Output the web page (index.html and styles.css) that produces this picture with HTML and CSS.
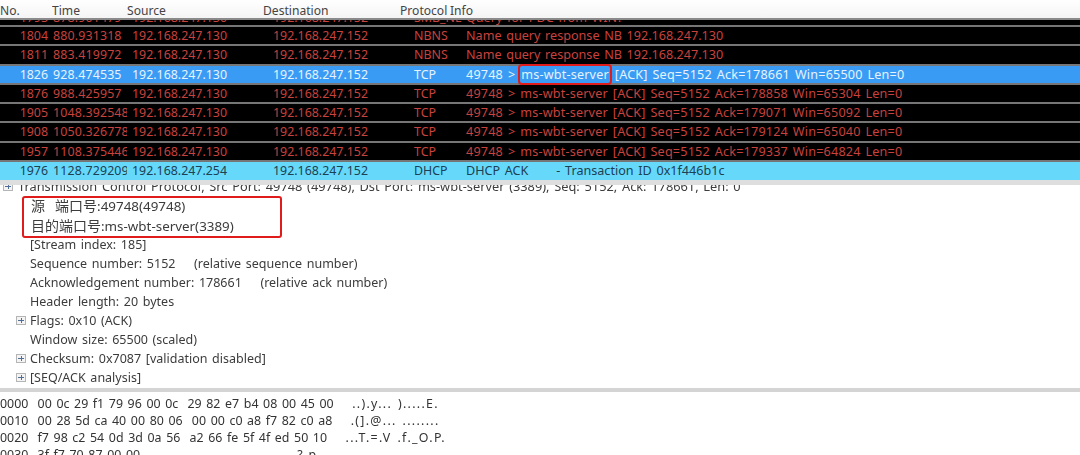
FILE: index.html
```html
<!DOCTYPE html>
<html lang="zh">
<head>
<meta charset="utf-8">
<title>Wireshark</title>
<link rel="stylesheet" href="styles.css">
</head>
<body>
<div class="app">
  <div class="row head"><span>No.</span><span>Time</span><span>Source</span><span>Destination</span><span>Protocol</span><span>Info</span></div>
  <div class="list">
    <div class="row pkt clipped"><span class="no">1793</span><span>878.901479</span><span>192.168.247.130</span><span>192.168.247.152</span><span class="wide">SMB_NE</span><span class="info">Query for PDC from WIN?</span></div>
    <div class="row pkt"><span class="no">1804</span><span>880.931318</span><span>192.168.247.130</span><span>192.168.247.152</span><span>NBNS</span><span class="info">Name query response NB 192.168.247.130</span></div>
    <div class="row pkt"><span class="no">1811</span><span>883.419972</span><span>192.168.247.130</span><span>192.168.247.152</span><span>NBNS</span><span class="info">Name query response NB 192.168.247.130</span></div>
    <div class="row pkt sel"><span class="no">1826</span><span>928.474535</span><span>192.168.247.130</span><span>192.168.247.152</span><span>TCP</span><span class="info tcp">49748 &gt; <b class="mark">ms-wbt-server</b> [ACK] Seq=5152 Ack=178661 Win=65500 Len=0</span></div>
    <div class="row pkt"><span class="no">1876</span><span>988.425957</span><span>192.168.247.130</span><span>192.168.247.152</span><span>TCP</span><span class="info tcp">49748 &gt; ms-wbt-server [ACK] Seq=5152 Ack=178858 Win=65304 Len=0</span></div>
    <div class="row pkt"><span class="no">1905</span><span>1048.392548</span><span>192.168.247.130</span><span>192.168.247.152</span><span>TCP</span><span class="info tcp">49748 &gt; ms-wbt-server [ACK] Seq=5152 Ack=179071 Win=65092 Len=0</span></div>
    <div class="row pkt"><span class="no">1908</span><span>1050.326778</span><span>192.168.247.130</span><span>192.168.247.152</span><span>TCP</span><span class="info tcp">49748 &gt; ms-wbt-server [ACK] Seq=5152 Ack=179124 Win=65040 Len=0</span></div>
    <div class="row pkt"><span class="no">1957</span><span>1108.375446</span><span>192.168.247.130</span><span>192.168.247.152</span><span>TCP</span><span class="info tcp">49748 &gt; ms-wbt-server [ACK] Seq=5152 Ack=179337 Win=64824 Len=0</span></div>
    <div class="row pkt dhcp"><span class="no">1976</span><span>1128.729209</span><span>192.168.247.254</span><span>192.168.247.152</span><span>DHCP</span><span class="info pre">DHCP ACK      - Transaction ID 0x1f446b1c</span></div>
  </div>
  <div class="tree">
    <div class="node top"><i class="plus"></i><span>Transmission Control Protocol, Src Port: 49748 (49748), Dst Port: ms-wbt-server (3389), Seq: 5152, Ack: 178661, Len: 0</span></div>
    <div class="ports">
      <div class="node"><span class="cjk">源&nbsp;&nbsp;端口号</span>:49748(49748)</div>
      <div class="node"><span class="cjk">目的端口号</span>:ms-wbt-server(3389)</div>
    </div>
    <div class="node">[Stream index: 185]</div>
    <div class="node pre">Sequence number: 5152    (relative sequence number)</div>
    <div class="node pre">Acknowledgement number: 178661    (relative ack number)</div>
    <div class="node">Header length: 20 bytes</div>
    <div class="node exp"><i class="plus"></i><span>Flags: 0x10 (ACK)</span></div>
    <div class="node">Window size: 65500 (scaled)</div>
    <div class="node exp"><i class="plus"></i><span>Checksum: 0x7087 [validation disabled]</span></div>
    <div class="node exp"><i class="plus"></i><span>[SEQ/ACK analysis]</span></div>
  </div>
  <pre class="hex">0000  00 0c 29 f1 79 96 00 0c  29 82 e7 b4 08 00 45 00    <span class="ascii">..).y... ).....E.</span>
0010  00 28 5d ca 40 00 80 06  00 00 c0 a8 f7 82 c0 a8    <span class="ascii">.(].@... ........</span>
0020  f7 98 c2 54 0d 3d 0a 56  a2 66 fe 5f 4f ed 50 10    <span class="ascii">...T.=.V .f._O.P.</span>
0030  3f f7 70 87 00 00                                  <span class="ascii">?.p</span></pre>
</div>
</body>
</html>
```

FILE: styles.css
```css
* { box-sizing: border-box; }
html, body { margin: 0; padding: 0; background: #fff; }
.app {
  width: 1080px;
  height: 455px;
  overflow: hidden;
  display: flex;
  flex-direction: column;
  font: 12.4px/19px "Noto Sans", "Noto Sans CJK SC", sans-serif;
  color: #3c3c3c;
  filter: blur(0.45px);
}
.row {
  display: grid;
  grid-template-columns: 53px 74px 143px 143px 50px 1fr;
  white-space: nowrap;
  flex: none;
}
.row > span { overflow: hidden; }
.row > span.wide { overflow: visible; }
.head {
  height: 20px;
  grid-template-columns: 52px 75px 136px 137px 50px 1fr;
  background: linear-gradient(#fff, #f4f4f4);
  border-bottom: 2px solid #8a8a8a;
  color: #444;
  font-size: 12.1px;
  line-height: 21px;
}
.list { flex: none; height: 160px; background: #000; overflow: hidden; }
.pkt {
  height: 19.3px;
  background: #000;
  color: #c8423e;
  border-bottom: 2px solid #767676;
  line-height: 18px;
}
.no { text-align: right; padding-right: 5px; }
.pkt > span:nth-child(2) { letter-spacing: 0.15px; }
.pkt > span:nth-child(n+3) { padding-left: 3px; }
.pkt > span:nth-child(3) { padding-left: 5px; }
.pkt > span:nth-child(5) { padding-left: 1px; }
.row > .info { font-size: 12.6px; word-spacing: 1.4px; overflow: visible; }
.row > .tcp { letter-spacing: 0.2px; }
.clipped { height: 7px; overflow: hidden; align-content: end; line-height: 15px; }
.sel { background: #3a9bf4; color: #e6f3ff; }
.dhcp { background: #66d9fb; color: #1d4052; border-bottom: 0; }
.mark { display: inline-block; height: 17px; line-height: 17px; font-weight: normal; outline: 2px solid #e01b1b; border-radius: 2px; padding: 0 1px; vertical-align: top; }
.pre { white-space: pre; }
.tree {
  flex: none;
  height: 208px;
  overflow: hidden;
  border-top: 5px solid #dedede;
  padding-left: 30px;
  font-size: 12.5px;
  word-spacing: 1.4px;
}
.node { height: 19px; white-space: pre; }
.cjk { font-size: 14px; }
.top { margin: -6px 0 0 -12px; height: 15px; display: flex; align-items: center; gap: 5px; font-size: 12.8px; }
.top .plus { margin-left: -15px; }
.exp { display: flex; align-items: center; margin-left: -14px; gap: 4px; }
.plus {
  flex: none;
  display: block;
  width: 10px;
  height: 9px;
  border: 1px solid #b5b5b5;
  background: linear-gradient(#4f6f9a, #4f6f9a) center / 6px 1px no-repeat, linear-gradient(#4f6f9a, #4f6f9a) center / 1px 5px no-repeat, #f4f4f4;
}
.ports {
  margin: 2px 0 -3px -8px;
  width: 260px;
  height: 42px;
  padding: 0 0 0 7px;
  border: 2px solid #e01b1b;
  border-radius: 3px;
  font-size: 13.4px;
}
.ports .node { height: 19.5px; line-height: 15px; }
.hex {
  flex: none;
  height: 67px;
  margin: 0;
  padding-top: 3px;
  border-top: 4px solid #d4d4d4;
  font: 12.4px/17px "Noto Sans", sans-serif;
  word-spacing: 1.4px;
  color: #333;
  overflow: hidden;
}
.ascii { letter-spacing: 1.3px; }
```
